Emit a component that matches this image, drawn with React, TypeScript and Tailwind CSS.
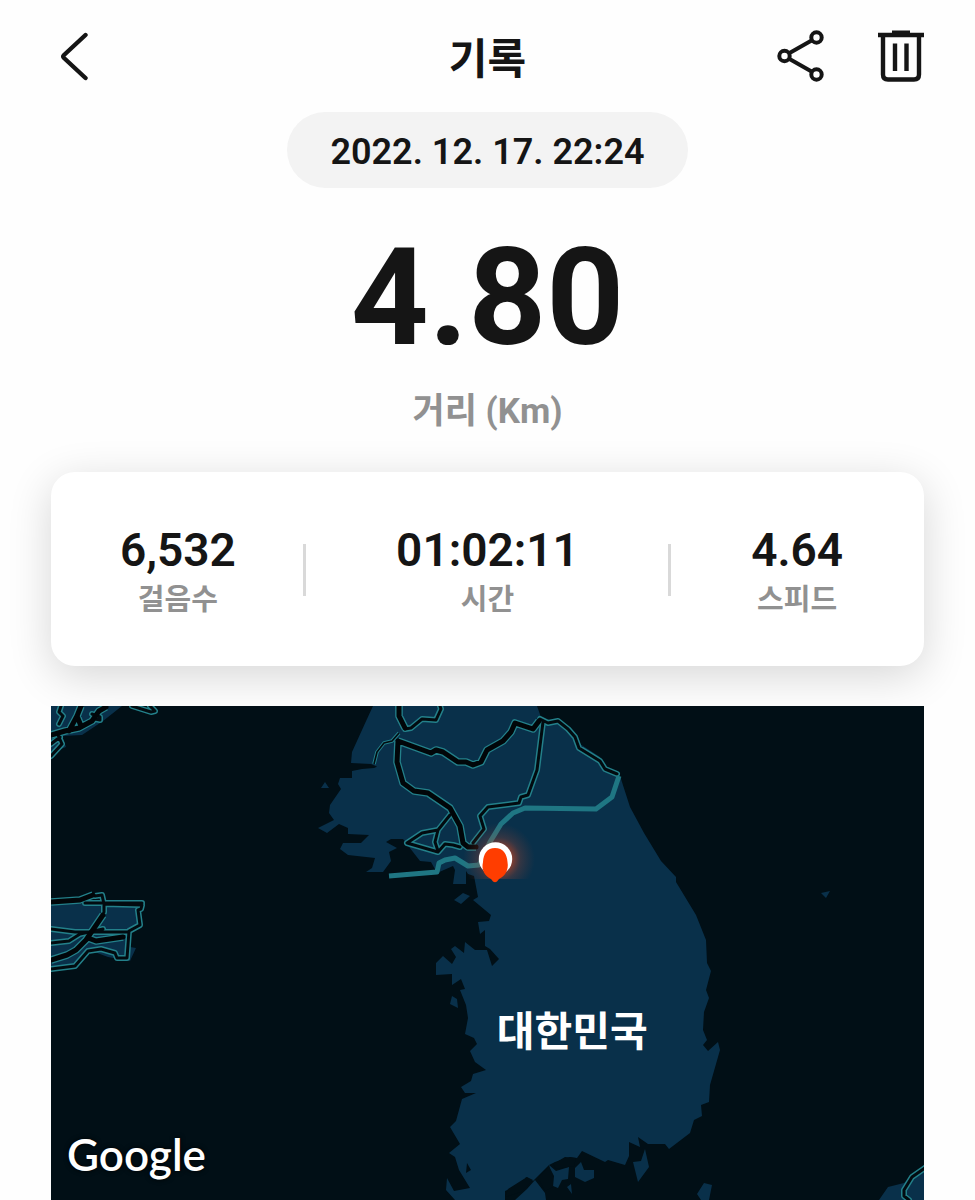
const stats = [
  { label: '걸음수', value: '6,532' },
  { label: '시간', value: '01:02:11' },
  { label: '스피드', value: '4.64' },
];

const land = [
  // Korean peninsula
  'M373 706L367 719L352 752L351 763L371 764L380 768L389 773L381 765L374 768L362 769L352 771L352 778L340 778L338 784L341 789L330 805L329 813L334 820L318 828L327 833L339 824L348 828L348 834L369 835L361 843L343 843L340 849L348 855L375 858L372 868L366 872L383 872L391 861L389 852L397 848L386 842L391 839L403 839L413 852L420 861L431 862L437 873L453 866L455 870L453 884L466 884L466 871L468 874L474 876L478 897L473 900L491 915L489 921L478 922L480 934L485 930L485 946L490 949L499 959L492 966L487 950L475 950L465 942L464 953L455 946L451 949L456 957L452 964L443 956L436 963L436 975L452 974L452 985L461 979L465 989L460 990L466 1005L468 1018L465 1034L474 1038L477 1044L470 1051L475 1062L486 1070L473 1074L471 1081L461 1087L465 1093L476 1093L462 1099L456 1121L450 1127L460 1144L449 1153L455 1157L459 1170L470 1188L454 1191L447 1178L446 1190L455 1200L505 1200L505 1191L523 1183L526 1177L533 1181L549 1165L555 1162L570 1157L577 1158L582 1151L605 1162L608 1160L625 1165L629 1156L629 1142L640 1147L638 1137L648 1144L665 1144L669 1149L690 1133L694 1120L702 1116L701 1105L709 1102L710 1085L720 1050L718 1042L708 1051L703 1045L707 1040L703 1030L704 1012L709 998L706 990L711 971L707 963L706 940L696 915L676 882L676 877L661 861L644 833L630 807L621 779L617 773L604 766L600 757L580 744L574 732L560 722L542 720L537 706Z',
  // small islands
  'M321 788L325 782L329 788Z',
  'M454 900L463 893L470 896L461 904Z',
  'M452 996L457 999L458 1008L450 1004Z',
  'M821 893L830 891L826 898Z',
  'M633 1162L641 1161L645 1149L649 1167L638 1182Z',
  'M697 1194L704 1183L712 1185L709 1200L701 1200Z',
  'M515 1200L527 1189L535 1180L545 1193L546 1200Z',
  'M549 1165L556 1171L569 1167L568 1179L562 1180L558 1188L553 1186Z',
  'M575 1168L581 1162L584 1170L594 1170L594 1178L585 1182L575 1177Z',
  'M567 1187L571 1184L572 1194Z',
  // left edge
  'M51 706L122 706L103 721L82 735L62 736L66 747L51 753Z',
  'M51 902L75 904L104 903L142 904L138 926L129 930L130 947L136 948L130 961L108 957L92 951L75 967L51 970Z',
  // bottom right
  'M879 1200L888 1187L904 1183L925 1164L925 1200Z',
];

const water = [
  'M553 1164L565 1157L576 1158L574 1166L556 1169Z',
  'M467 1163L471 1170L466 1173Z',
  'M508 1189L527 1177L533 1180L521 1192L505 1197Z',
  'M538 1178L549 1166L554 1176L553 1187L545 1191Z',
];

const wideRoads = [
  'M398 741L431 753L436 750L443 752L458 762L466 762L473 765L481 762L487 750L503 741L511 732L515 723L533 729L539 721',
  'M398 741L397 762L403 783L414 791L428 793L450 808L460 826L463 843L468 847L476 847',
  'M399 706L399 716L405 728',
  'M51 735L65 731L79 728L92 721L99 711L106 707',
  'M69 731L77 716L81 706',
  'M77 716L81 726',
  'M51 902L80 900L93 895',
  'M103 915L86 940L76 950L67 955L51 960',
  'M88 938L96 941L123 937',
];

const narrowRoads = [
  'M405 729L411 728L422 719L436 720L441 709L440 706',
  'M540 719L548 723L558 721L568 729L575 737L579 748L600 761L605 769L617 774',
  'M543 722L537 770L528 795L521 797L519 803L488 807L480 816L484 829L473 843',
  'M450 815L438 830L422 833L407 843L438 852L445 844L453 845L460 847',
  'M438 830L435 842L438 851',
  'M132 706L151 712L155 711L150 706',
  'M95 896L102 895L104 904L142 905L141 909L138 910L140 925L129 931L127 958L117 958L115 953L101 949L88 951L75 966L51 969',
  'M85 903L142 903',
  'M51 929L75 932L127 932',
  'M51 943L69 941L80 934L103 929',
  'M104 905L104 912',
  'M61 706L59 712L63 716L59 724',
  'M92 714L100 717L100 720L95 719',
  'M51 756L62 744L58 735',
  'M51 744L60 737',
  'M925 1168L912 1177L904 1190L904 1196L909 1200',
];

function BackIcon() {
  return (
    <svg viewBox="0 0 32 50" className="h-[50px] w-8" fill="none" stroke="#151515" strokeWidth="4.4" aria-hidden="true">
      <path d="M26.500 4L5 24Q3.500 25.500 5 27L26.500 47" strokeLinecap="round" />
    </svg>
  );
}

function ShareIcon() {
  return (
    <svg viewBox="0 0 48 54" className="h-[54px] w-12" fill="none" stroke="#151515" strokeWidth="4" aria-hidden="true">
      <circle cx="8.500" cy="27" r="5.200" />
      <circle cx="40.500" cy="8.500" r="5.200" />
      <circle cx="40.500" cy="45.500" r="5.200" />
      <path d="M13.100 24.300L36 11.200M13.100 29.700L36 42.800" />
    </svg>
  );
}

function TrashIcon() {
  return (
    <svg viewBox="0 0 48 54" className="h-[54px] w-12" fill="none" stroke="#151515" strokeWidth="4.4" aria-hidden="true">
      <path d="M2 6H48" />
      <path d="M16 4H34" strokeWidth="5" />
      <path d="M7 6V45.500Q7 50.500 12 50.500H38Q43 50.500 43 45.500V6M19 14.500V42M30.500 14.500V42" />
    </svg>
  );
}

function RouteMap() {
  return (
    <svg viewBox="51 706 873 494" className="block w-full" role="img" aria-label="지도">
      <defs>
        <radialGradient id="glow">
          <stop offset="0.3" stopColor="#ff4a14" stopOpacity="0.6" />
          <stop offset="0.6" stopColor="#c84a2c" stopOpacity="0.22" />
          <stop offset="1" stopColor="#a04030" stopOpacity="0" />
        </radialGradient>
        <clipPath id="glowClip">
          <path d="M455 815H540V879H455Z" />
        </clipPath>
      </defs>
      <path d="M51 706H924V1200H51Z" fill="#010f16" />
      <path d={land.join('')} fill="#09304a" />
      <path d={water.join('')} fill="#010f16" />

      <g fill="none" strokeLinejoin="round">
        <path d="M399 733L392 741L384 743L377 752L374 764" stroke="#23808a" strokeWidth="3.600" />
        <path d="M399 733L392 741L384 743L377 752L374 764" stroke="#020b10" strokeWidth="1.600" />
        <path d={narrowRoads.join('')} stroke="#23808a" strokeWidth="6" strokeLinecap="round" />
        <path d={wideRoads.join('')} stroke="#23808a" strokeWidth="7.600" />
        <path d={narrowRoads.join('')} stroke="#020b10" strokeWidth="3" strokeLinecap="round" />
        <path d={wideRoads.join('')} stroke="#010609" strokeWidth="5" strokeLinecap="round" />
        <path
          d="M389 876L437 872L439 863L445 860L455 858L468 866L479 865L490 842L501 824L513 813L525 808L596 809L612 797L619 776"
          stroke="#1f7683"
          strokeWidth="5"
        />
      </g>

      <circle cx="499" cy="859" r="36" fill="url(#glow)" clipPath="url(#glowClip)" />
      <circle cx="495.500" cy="859" r="16.700" fill="#fff" />
      <path
        d="M495 848C487 848 483.500 854 483 862C481 870 485 876 491 879L493 881.500Q495 883 497 881.500L499 879C505 876 509 870 507.500 862C507 854 503 848 495 848Z"
        fill="#ff3d00"
      />
    </svg>
  );
}

export default function App() {
  return (
    <main className="min-h-screen overflow-hidden bg-[#fefefe] font-['Roboto','Noto_Sans_CJK_KR',sans-serif] text-[#151515]">
      <header className="grid h-28 grid-cols-3 items-center px-[51px]">
        <button type="button" aria-label="뒤로" className="justify-self-start px-2">
          <BackIcon />
        </button>
        <h1 className="pt-2 text-center text-[42px] leading-none font-bold">기록</h1>
        <div className="flex gap-[52px] justify-self-end">
          <button type="button" aria-label="공유">
            <ShareIcon />
          </button>
          <button type="button" aria-label="삭제">
            <TrashIcon />
          </button>
        </div>
      </header>

      <section className="flex flex-col items-center">
        <time
          dateTime="2022-12-17T22:24"
          className="rounded-full bg-[#f3f3f3] px-[43px] pt-4 pb-3 text-[36px] leading-12 font-semibold"
        >
          2022. 12. 17. 22:24
        </time>
        <p className="mt-10 text-[136px] leading-[140px] font-bold">4.80</p>
        <p className="mt-5 text-[35px] leading-12 font-bold text-[#919191]">거리 (Km)</p>
      </section>

      <section className="mx-[51px] mt-9 grid grid-cols-[254fr_366fr_254fr] rounded-3xl bg-white pt-[52px] pb-[42px] shadow-[0_10px_44px_rgba(0,0,0,0.16)]">
        {stats.map((stat) => (
          <div key={stat.label} className="group relative flex flex-col items-center">
            <span className="text-[46px] leading-[52px] font-semibold">{stat.value}</span>
            <span className="text-[29px] leading-[48px] font-bold text-[#919191]">{stat.label}</span>
            <span className="absolute top-5 -right-px h-[52px] w-[3px] bg-[#d9d9d9] group-last:hidden" />
          </div>
        ))}
      </section>

      <section className="relative mx-[51px] mt-10">
        <RouteMap />
        <span className="absolute top-[66%] left-[59.7%] -translate-x-1/2 -translate-y-1/2 text-[41px] leading-none font-bold whitespace-nowrap text-white">
          대한민국
        </span>
        <span className="absolute bottom-6 left-4 font-['Lato',sans-serif] text-[44px] leading-none font-semibold text-white [text-shadow:0_0_5px_#000]">
          Google
        </span>
      </section>
    </main>
  );
}
